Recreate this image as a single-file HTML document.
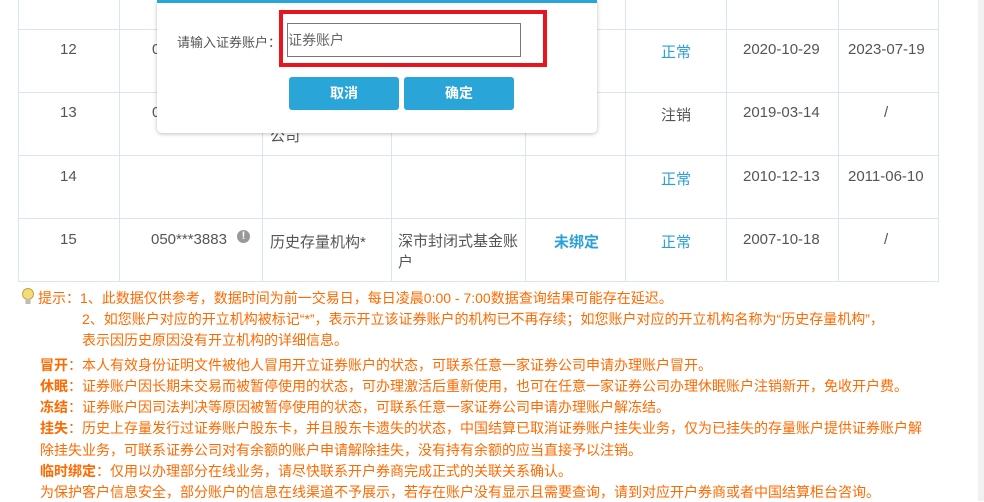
<!DOCTYPE html>
<html><head><meta charset="utf-8"><style>
body{margin:0;width:984px;height:501px;overflow:hidden;background:#fff;font-family:"Liberation Sans","Noto Sans CJK SC",sans-serif;position:relative;color:#555}
.v{position:absolute;top:0;width:1px;height:282px;background:#dbe4f3}
.h{position:absolute;left:18px;width:921px;height:1px;background:#dbe4f3}
.t{position:absolute;font-size:15px;white-space:nowrap}
.b{color:#29a0d8}
.scroll{position:absolute;left:978px;top:0;width:6px;height:501px;background:#f1f1f1}
.modal{position:absolute;left:157px;top:0;width:440px;height:130px;background:#fff;border-top:3px solid #29a5d8;border-radius:0 0 5px 5px;box-shadow:0 1px 4px rgba(0,0,0,.25)}
.red{position:absolute;left:279px;top:10px;width:260px;height:49px;border:4px solid #e8141e}
.inp{position:absolute;left:287px;top:23px;width:232px;height:32px;border:1px solid #777;font-size:14px;line-height:32px;color:#666;box-sizing:content-box}
.btn{position:absolute;top:77px;width:110px;height:33px;background:#29a5d8;border-radius:3px;color:#fff;font-size:14px;font-weight:bold;text-align:center;line-height:33px}
.n{position:absolute;font-size:14px;color:#ff6a00;white-space:nowrap}
.n b{font-weight:bold}
</style></head><body>
<div class="scroll"></div>
<div class="v" style="left:18px"></div><div class="v" style="left:119px"></div><div class="v" style="left:262px"></div><div class="v" style="left:391px"></div><div class="v" style="left:525px"></div><div class="v" style="left:625px"></div><div class="v" style="left:726px"></div><div class="v" style="left:838px"></div><div class="v" style="left:938px"></div>
<div class="h" style="top:29px"></div><div class="h" style="top:92px"></div><div class="h" style="top:155px"></div><div class="h" style="top:218px"></div><div class="h" style="top:281px"></div>
<div class="t" style="left:60px;top:41px">12</div><div class="t" style="left:152px;top:41px">0</div>
<div class="t b" style="left:661px;top:41px">正常</div><div class="t" style="left:743px;top:41px">2020-10-29</div><div class="t" style="left:848px;top:41px">2023-07-19</div>
<div class="t" style="left:60px;top:104px">13</div><div class="t" style="left:152px;top:104px">0</div><div class="t" style="left:270px;top:125px">公司</div>
<div class="t" style="left:661px;top:104px">注销</div><div class="t" style="left:743px;top:104px">2019-03-14</div><div class="t" style="left:884px;top:104px">/</div>
<div class="t" style="left:60px;top:168px">14</div>
<div class="t b" style="left:661px;top:168px">正常</div><div class="t" style="left:743px;top:168px">2010-12-13</div><div class="t" style="left:848px;top:168px">2011-06-10</div>
<div class="t" style="left:60px;top:231px">15</div><div class="t" style="left:151px;top:231px">050***3883</div>
<div style="position:absolute;left:237px;top:230px;width:13px;height:13px;border-radius:50%;background:#999;color:#fff;font-size:11px;font-weight:bold;text-align:center;line-height:13px">!</div>
<div class="t" style="left:270px;top:231px">历史存量机构*</div><div class="t" style="left:398px;top:231px;line-height:21px">深市封闭式基金账<br>户</div>
<div class="t b" style="left:554px;top:231px;font-weight:bold">未绑定</div>
<div class="t b" style="left:661px;top:231px">正常</div><div class="t" style="left:743px;top:231px">2007-10-18</div><div class="t" style="left:884px;top:231px">/</div>
<div class="modal"></div>
<div class="t" style="left:177px;top:32px;font-size:13px">请输入证券账户：</div>
<div class="red"></div>
<div class="inp"> 证券账户</div>
<div class="btn" style="left:289px">取消</div><div class="btn" style="left:404px">确定</div>
<svg style="position:absolute;left:22px;top:288px" width="12" height="18" viewBox="0 0 12 18"><ellipse cx="6" cy="6" rx="5.5" ry="5.5" fill="#f5dc7a" stroke="#c9a23a"/><rect x="3.5" y="11" width="5" height="5" fill="#bbb"/></svg>
<div class="n" style="left:38px;top:288px">提示：1、此数据仅供参考，数据时间为前一交易日，每日凌晨0:00 - 7:00数据查询结果可能存在延迟。</div>
<div class="n" style="left:82px;top:309px">2、如您账户对应的开立机构被标记“*”，表示开立该证券账户的机构已不再存续；如您账户对应的开立机构名称为“历史存量机构”，</div>
<div class="n" style="left:82px;top:330px">表示因历史原因没有开立机构的详细信息。</div>
<div class="n" style="left:40px;top:355px"><b>冒开</b>：本人有效身份证明文件被他人冒用开立证券账户的状态，可联系任意一家证券公司申请办理账户冒开。</div>
<div class="n" style="left:40px;top:376px"><b>休眠</b>：证券账户因长期未交易而被暂停使用的状态，可办理激活后重新使用，也可在任意一家证券公司办理休眠账户注销新开，免收开户费。</div>
<div class="n" style="left:40px;top:397px"><b>冻结</b>：证券账户因司法判决等原因被暂停使用的状态，可联系任意一家证券公司申请办理账户解冻结。</div>
<div class="n" style="left:40px;top:418px"><b>挂失</b>：历史上存量发行过证券账户股东卡，并且股东卡遗失的状态，中国结算已取消证券账户挂失业务，仅为已挂失的存量账户提供证券账户解</div>
<div class="n" style="left:40px;top:440px">除挂失业务，可联系证券公司对有余额的账户申请解除挂失，没有持有余额的应当直接予以注销。</div>
<div class="n" style="left:40px;top:461px"><b>临时绑定</b>：仅用以办理部分在线业务，请尽快联系开户券商完成正式的关联关系确认。</div>
<div class="n" style="left:40px;top:482px">为保护客户信息安全，部分账户的信息在线渠道不予展示，若存在账户没有显示且需要查询，请到对应开户券商或者中国结算柜台咨询。</div>
</body></html>
